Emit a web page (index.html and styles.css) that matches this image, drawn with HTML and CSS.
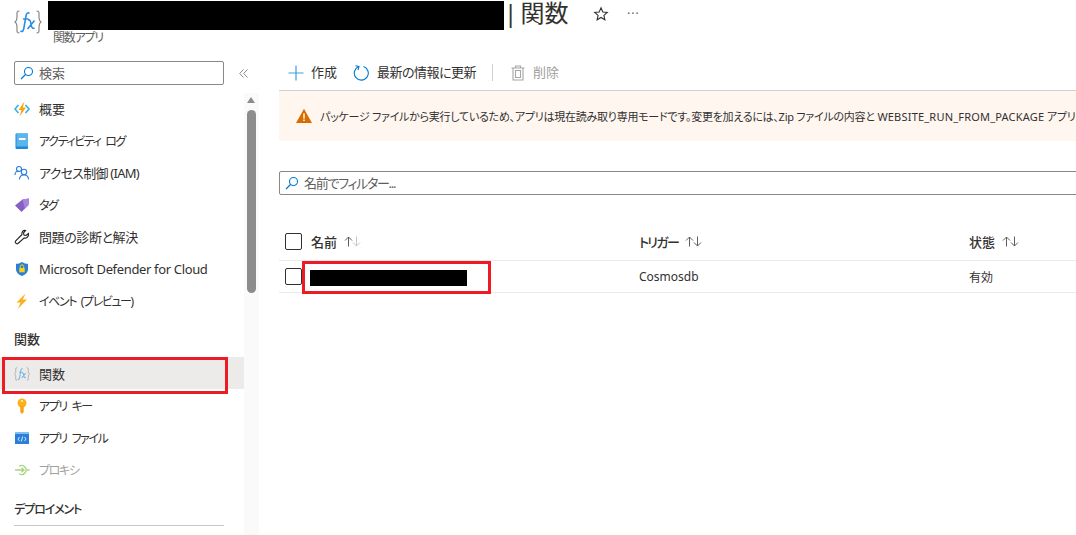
FILE: index.html
```html
<!DOCTYPE html>
<html lang="ja">
<head>
<meta charset="utf-8">
<title>関数</title>
<link rel="stylesheet" href="styles.css">
</head>
<body>
<div class="page">
  <header class="header">
    <svg class="fx-logo" viewBox="0 0 28 24"><path d="M5.500 1C2.500 1 3 3 3 6S3 10.800 1 12c2 1.200 2 3 2 6s-.5 5 2.500 5M22.500 1c3 0 2.500 2 2.500 5s0 4.800 2 6c-2 1.200-2 3-2 6s.5 5-2.500 5" fill="none" stroke="#8a8886" stroke-width="1.200"/><path d="M15.500 3.500C14 2 12.500 3 12 6L9.800 18.500C9.300 21.500 7.800 22 6.500 21M9 9h5.500M14 10c2-.5 2.500 1 3 4 .5 3.500 1.500 5 3.500 4M20.500 10.500L13.500 19" fill="none" stroke="#2e8fe0" stroke-width="1.600"/></svg>
    <div class="title-block">
      <div class="title-row">
        <div class="redact-title"></div>
        <h1 class="title">| 関数</h1>
        <svg class="star" viewBox="0 0 16 16"><path d="M8 1.800l1.800 4.200 4.500.4-3.400 3 1 4.400L8 11.500l-3.900 2.300 1-4.400-3.400-3 4.500-.4z" fill="none" stroke="#333" stroke-width="1.100"/></svg>
        <span class="more">···</span>
      </div>
      <div class="subtitle">関数アプリ</div>
    </div>
  </header>

  <div class="body">
    <nav class="sidebar">
      <div class="search-row">
        <div class="search">
          <svg class="mag" viewBox="0 0 14 14"><circle cx="8.500" cy="5.500" r="4" fill="none" stroke="#0078d4" stroke-width="1.100"/><path d="M5.500 8.500L1 13" stroke="#0078d4" stroke-width="1.200"/></svg>
          <span class="cjk">検索</span>
        </div>
        <svg class="collapse" viewBox="0 0 9 9"><path d="M4.500 .5L.7 4.500l3.800 4M8.500 .5L4.700 4.500l3.800 4" fill="none" stroke="#8a8886"/></svg>
      </div>
      <ul class="menu">
        <li class="item"><svg class="ico" viewBox="0 0 16 16"><path d="M4.500 4L1 8l3.500 4M11.500 4L15 8l-3.500 4" fill="none" stroke="#32b0e7" stroke-width="1.600"/><path d="M10.500 .5L4.500 9h3L5.500 15.500 12 6.500H8.800z" fill="#f7a30a"/></svg><span class="label cjk">概要</span></li>
        <li class="item"><svg class="ico" viewBox="0 0 16 16"><rect x="1.500" y="0.500" width="12.500" height="15.500" rx="1" fill="#1e88d8"/><rect x="2.500" y="0.500" width="11.500" height="13" fill="#5ab4ee"/><rect x="5" y="5" width="6.500" height="2" fill="#fff"/></svg><span class="label kana">アクティビティ ログ</span></li>
        <li class="item"><svg class="ico" viewBox="0 0 16 16"><circle cx="5" cy="4" r="2.500" fill="none" stroke="#2a7fd8" stroke-width="1.100"/><path d="M1 10c0-3 2-4 4-4" fill="none" stroke="#2a7fd8" stroke-width="1.100"/><circle cx="10" cy="7" r="2.700" fill="none" stroke="#2a7fd8" stroke-width="1.100"/><path d="M5.500 14.500c0-3 2-4.500 4.500-4.500s4.500 1.500 4.500 4.500" fill="none" stroke="#2a7fd8" stroke-width="1.100"/></svg><span class="label cjk mixed">アクセス制御 (IAM)</span></li>
        <li class="item"><svg class="ico" viewBox="0 0 16 16"><path d="M1 8.500L8.500 2.500 15 1.500 14.500 8l-7 7z" fill="#8661c5"/><path d="M8.500 2.500L15 1.500 14.500 8 11 11.500z" fill="#a886dd"/></svg><span class="label kana">タグ</span></li>
        <li class="item"><svg class="ico" viewBox="0 0 16 16"><path d="M14.500 4.500l-2.500 2-2-.5-.5-2 2-2.500c-2.500-.5-4 1.500-3.500 4L1.500 12c-1 1.500 1 3.500 2.500 2.500L10 9c2.500.5 5-1.500 4.500-4.500z" fill="none" stroke="#222" stroke-width="1.100"/></svg><span class="label cjk tight">問題の診断と解決</span></li>
        <li class="item"><svg class="ico" viewBox="0 0 16 16"><path d="M8 1c2 1.300 4 1.800 6 1.800v5.500c0 3.200-3 5.700-6 6.700-3-1-6-3.500-6-6.700V2.800C4 2.800 6 2.300 8 1z" fill="#2a7fd8"/><rect x="5.300" y="7" width="5.400" height="4.300" fill="#fcd116"/><path d="M6.300 7V5.500a1.700 1.700 0 013.400 0V7" fill="none" stroke="#fcd116"/></svg><span class="label latin">Microsoft Defender for Cloud</span></li>
        <li class="item"><svg class="ico" viewBox="0 0 16 16"><path d="M11.500 .5L2.500 9.500h4L4 15.800 13 6.500H8.800z" fill="#fcb11c"/></svg><span class="label kana">イベント (プレビュー)</span></li>
        <li class="section first"><span class="label cjk">関数</span></li>
        <li class="item selected"><svg class="ico faded" viewBox="0 0 28 24"><path d="M5.500 1C2.500 1 3 3 3 6S3 10.800 1 12c2 1.200 2 3 2 6s-.5 5 2.500 5M22.500 1c3 0 2.500 2 2.500 5s0 4.800 2 6c-2 1.200-2 3-2 6s.5 5-2.500 5" fill="none" stroke="#8a8886" stroke-width="1.500"/><path d="M15.500 3.500C14 2 12.500 3 12 6L9.800 18.500C9.300 21.500 7.800 22 6.500 21M9 9h5.500M14 10c2-.5 2.500 1 3 4 .5 3.500 1.500 5 3.500 4M20.500 10.500L13.500 19" fill="none" stroke="#3f9fe0" stroke-width="1.800"/></svg><span class="label cjk">関数</span></li>
        <li class="item"><svg class="ico" viewBox="0 0 16 16"><circle cx="8" cy="5" r="4.500" fill="#fcb11c"/><path d="M6.300 8h3.400v6L8 16l-1.700-2z" fill="#f7a30a"/><circle cx="8" cy="3" r="1" fill="#fff3c4"/></svg><span class="label kana">アプリ キー</span></li>
        <li class="item"><svg class="ico" viewBox="0 0 16 16"><rect x="1" y="2" width="14" height="12" fill="#2a7fd8"/><rect x="1" y="2" width="14" height="2" fill="#7cc0f5"/><path d="M5.500 7L4 9l1.500 2M10.500 7L12 9l-1.500 2M8.700 6.500L7.300 11.500" fill="none" stroke="#fff" stroke-width=".8"/></svg><span class="label kana">アプリ ファイル</span></li>
        <li class="item disabled"><svg class="ico" viewBox="0 0 16 16"><path d="M5 4.300a4.500 4.500 0 110 7.400M1 8h9M7.500 5.800L10 8l-2.500 2.200M13 8h2.500" fill="none" stroke="#a8d47c" stroke-width="1.300"/></svg><span class="label kana">プロキシ</span></li>
        <li class="section second"><span class="label kana">デプロイメント</span></li>
      </ul>
      <div class="rule"></div>
    </nav>

    <div class="scrollbar">
      <span class="arrow"></span>
      <span class="thumb"></span>
    </div>

    <main class="main">
      <div class="toolbar">
        <button class="tool"><svg class="tool-ico" viewBox="0 0 16 16"><path d="M8 .5v15M.5 8h15" stroke="#3f9fe0" stroke-width="1.200"/></svg><span class="cjk">作成</span></button>
        <button class="tool refresh"><svg class="tool-ico" viewBox="0 0 16 16"><path d="M5.800 1.600A7 7 0 1 0 10.500 1.500" fill="none" stroke="#0078d4" stroke-width="1.100"/><path d="M2.500 .8L6 1.500 5 5" fill="none" stroke="#0078d4" stroke-width="1.100"/></svg><span class="cjk">最新の情報に更新</span></button>
        <span class="sep"></span>
        <button class="tool off"><svg class="tool-ico" viewBox="0 0 16 16"><path d="M1.500 3h13M5.500 3V1h5v2M3 3v12h10V3M5.500 5.500v7h5v-7z" fill="none" stroke="#a6a6a6" stroke-width="1.100"/></svg><span class="cjk">削除</span></button>
      </div>
      <div class="warning">
        <svg class="warn-ico" viewBox="0 0 16 16"><path d="M8 .8L16 15H0z" fill="#d96c00"/><path d="M8 5.500v5M8 11.500v1.600" stroke="#fff" stroke-width="1.500"/></svg>
        <span class="warn-text">パッケージ ファイルから実行しているため、アプリは現在読み取り専用モードです。変更を加えるには、Zip ファイルの内容と <span class="warn-latin">WEBSITE_RUN_FROM_PACKAGE</span> アプリ</span>
      </div>
      <div class="filter">
        <svg class="mag" viewBox="0 0 14 14"><circle cx="8.500" cy="5.500" r="4" fill="none" stroke="#0078d4" stroke-width="1.100"/><path d="M5.500 8.500L1 13" stroke="#0078d4" stroke-width="1.200"/></svg>
        <span class="cjk filter-text">名前でフィルター...</span>
      </div>
      <div class="table">
        <div class="row head">
          <span class="check big"></span>
          <span class="th">名前<svg class="sort" viewBox="0 0 17 11"><path d="M4.500 10.500V1M1 4.500L4.500 1 8 4.500" fill="none" stroke="#605e5c"/><path d="M12.500 .5V10M9 6.500L12.500 10 16 6.500" fill="none" stroke="#c8c6c4"/></svg></span>
          <span class="th trigger">トリガー<svg class="sort" viewBox="0 0 17 11"><path d="M4.500 10.500V1M1 4.500L4.500 1 8 4.500" fill="none" stroke="#605e5c"/><path d="M12.500 .5V10M9 6.500L12.500 10 16 6.500" fill="none" stroke="#605e5c"/></svg></span>
          <span class="th">状態<svg class="sort" viewBox="0 0 17 11"><path d="M4.500 10.500V1M1 4.500L4.500 1 8 4.500" fill="none" stroke="#605e5c"/><path d="M12.500 .5V10M9 6.500L12.500 10 16 6.500" fill="none" stroke="#605e5c"/></svg></span>
        </div>
        <div class="row data">
          <span class="check"></span>
          <span class="redact-name"></span>
          <span class="td">Cosmosdb</span>
          <span class="td">有効</span>
        </div>
      </div>
    </main>
  </div>

  <div class="mark mark-nav"></div>
  <div class="mark mark-row"></div>
</div>
</body>
</html>
```

FILE: styles.css
```css
* { box-sizing: border-box; }
html, body { margin: 0; padding: 0; background: #fff; }
body { font-family: "Noto Sans", "Noto Sans CJK JP", sans-serif; font-size: 13px; color: #323130; font-feature-settings: "palt" 1; }
.page { position: relative; width: 1076px; height: 535px; overflow: hidden; }

.header { display: flex; height: 50px; padding-left: 14px; }
.fx-logo { width: 28px; height: 24px; margin-top: 10px; flex: none; }
.title-block { margin-left: 6px; display: flex; flex-direction: column; }
.title-row { display: flex; align-items: flex-start; height: 30px; margin-top: 1px; }
.redact-title { width: 456px; height: 29px; background: #000; flex: none; }
.title { flex: none; width: 89px; margin: -1px 0 0; font-size: 24px; font-weight: 400; line-height: 26px; word-spacing: -3px; color: #323130; white-space: nowrap; }
.star { width: 16px; height: 16px; margin-top: 5px; flex: none; }
.more { margin: 3px 0 0 18px; font-size: 12px; line-height: 20px; letter-spacing: 1px; color: #605e5c; }
.subtitle { margin: 0 0 0 5px; font-size: 12px; line-height: 14px; letter-spacing: -1.200px; color: #605e5c; }

.body { display: flex; height: 485px; }

.sidebar { width: 244px; flex: none; }
.search-row { display: flex; align-items: center; height: 24px; margin-top: 11px; padding-left: 14px; }
.search { display: flex; align-items: center; gap: 5px; flex: none; width: 210px; height: 24px; padding-left: 5px; border: 1px solid #8a8886; border-radius: 2px; color: #605e5c; }
.mag { width: 14px; height: 14px; flex: none; }
.collapse { width: 9px; height: 9px; flex: none; margin-left: 15px; }

.menu { list-style: none; margin: 8px 0 0; padding: 0; }
.item { display: flex; align-items: center; height: 32px; padding-left: 14px; }
.ico { width: 16px; height: 16px; flex: none; margin-right: 9px; }
.faded { opacity: .7; }
.label { white-space: nowrap; color: #323130; }
.cjk { padding-bottom: 2px; }
.kana { font-size: 12px; letter-spacing: -1.400px; word-spacing: 3px; }
.mixed { letter-spacing: -.75px; }
.tight { letter-spacing: -.4px; }
.latin { letter-spacing: -.35px; }
.selected { background: #edebe9; margin-bottom: 1px; padding-top: 2px; }
.disabled .label { color: #a19f9d; }
.section { display: flex; align-items: center; padding-left: 14px; height: 24px; }
.section .label { font-weight: 500; }
.section.first { margin-top: 11px; margin-bottom: 5px; }
.section.first .label { padding-bottom: 4px; }
.section.second { margin-top: 11px; }
.section.second .label { letter-spacing: -1.100px; }
.rule { width: 210px; height: 1px; margin: 4px 0 0 14px; background: #c8c6c4; }

.scrollbar { position: relative; width: 15px; flex: none; margin-top: 43px; background: #fafafa; }
.arrow { position: absolute; left: 3px; top: 4px; border: 4.5px solid transparent; border-top: 0; border-bottom: 6px solid #8c8c8c; }
.thumb { position: absolute; left: 3px; top: 17px; width: 9px; height: 183px; border-radius: 4.5px; background: #8c8c8c; }

.main { flex: none; width: 797px; margin-left: 20px; }
.toolbar { display: flex; align-items: center; height: 41px; padding: 5px 0 0 9px; border-bottom: 1px solid #d2d0ce; }
.tool { display: flex; align-items: center; gap: 7px; margin: 0 16px 0 0; padding: 0; border: 0; background: none; font: inherit; font-feature-settings: "palt" 1; color: #323130; }
.refresh { gap: 8px; letter-spacing: -.5px; }
.tool-ico { width: 16px; height: 16px; flex: none; }
.tool.off { color: #a19f9d; }
.sep { width: 1px; height: 17px; margin-right: 17px; background: #d2d0ce; }

.warning { display: flex; align-items: center; height: 50px; padding-left: 17px; background: #fff6f0; white-space: nowrap; }
.warn-ico { width: 16px; height: 16px; flex: none; margin-right: 8px; }
.warn-text { font-size: 11px; letter-spacing: -.25px; }
.warn-latin { letter-spacing: .2px; }

.filter { display: flex; align-items: center; gap: 5px; width: 820px; height: 24px; margin-top: 30px; padding-left: 5px; border: 1px solid #8a8886; border-radius: 2px; color: #605e5c; }
.filter-text { letter-spacing: -1.300px; }

.table { margin-top: 27px; }
.row { display: grid; grid-template-columns: 26px 328px 330px 1fr; align-items: center; padding-left: 6px; width: 820px; border-bottom: 1px solid #edebe9; }
.head { height: 39px; }
.data { height: 32px; }
.check { width: 17px; height: 17px; border: 1px solid #323130; border-radius: 2px; }
.th { display: flex; align-items: center; font-weight: 500; white-space: nowrap; }
.trigger { letter-spacing: -1.700px; }
.td { font-size: 12px; color: #323130; }
.sort { width: 17px; height: 11px; margin-left: 7px; flex: none; }
.redact-name { display: block; width: 157px; height: 16px; margin: 3px 0 0 -1px; background: #000; }

.mark { position: absolute; border: 3px solid #ed1c24; }
.mark-nav { left: 2px; top: 357px; width: 226px; height: 37px; }
.mark-row { left: 302px; top: 261px; width: 189px; height: 33px; }
```
